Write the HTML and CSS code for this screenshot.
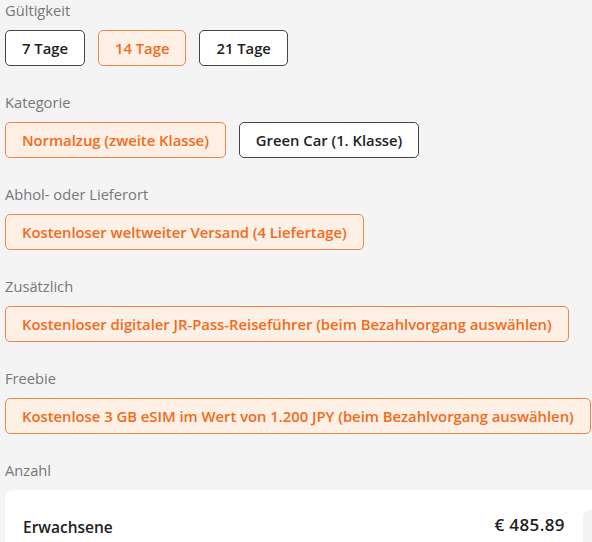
FILE: index.html
```html
<!DOCTYPE html>
<html lang="de">
<head>
    <meta charset="UTF-8">
    <title>JR Pass Optionen</title>
    <link rel="stylesheet" href="styles.css">
</head>
<body>
    <div class="options">
        <div class="group">
            <div class="label">Gültigkeit</div>
            <div class="choices">
                <button class="choice">7 Tage</button>
                <button class="choice active">14 Tage</button>
                <button class="choice">21 Tage</button>
            </div>
        </div>

        <div class="group">
            <div class="label">Kategorie</div>
            <div class="choices">
                <button class="choice active">Normalzug (zweite Klasse)</button>
                <button class="choice">Green Car (1. Klasse)</button>
            </div>
        </div>

        <div class="group">
            <div class="label">Abhol- oder Lieferort</div>
            <div class="choices">
                <button class="choice active">Kostenloser weltweiter Versand (4 Liefertage)</button>
            </div>
        </div>

        <div class="group">
            <div class="label">Zusätzlich</div>
            <div class="choices">
                <button class="choice active">Kostenloser digitaler JR-Pass-Reiseführer (beim Bezahlvorgang auswählen)</button>
            </div>
        </div>

        <div class="group">
            <div class="label">Freebie</div>
            <div class="choices">
                <button class="choice active">Kostenlose 3 GB eSIM im Wert von 1.200 JPY (beim Bezahlvorgang auswählen)</button>
            </div>
        </div>

        <div class="group">
            <div class="label">Anzahl</div>
            <div class="count-card">
                <span class="count-name">Erwachsene</span>
                <span class="count-price">€ 485.89</span>
                <div class="stepper"></div>
            </div>
        </div>
    </div>
</body>
</html>
```

FILE: styles.css
```css
body {
    margin: 0;
    background-color: #f4f4f4;
    font-family: 'Open Sans', sans-serif;
    color: #222;
    overflow: hidden;
}

.options {
    padding: 0 0 0 5px;
}

.group {
    margin-bottom: 26px;
}

.label {
    font-size: 14.7px;
    color: #777;
    height: 20px;
    line-height: 20px;
    margin-bottom: 10px;
}

.choices {
    display: flex;
    gap: 13px;
    white-space: nowrap;
}

.choice {
    flex: none;
    height: 36px;
    padding: 0 16px;
    font-family: inherit;
    font-size: 14.8px;
    font-weight: 600;
    color: #222;
    background-color: #fff;
    border: 1px solid #444;
    border-radius: 5px;
}

.choice.active {
    color: #f26a1b;
    background-color: #fff0e5;
    border-color: #f0844a;
}

.count-card {
    width: 720px;
    height: 80px;
    margin-top: 10px;
    padding: 20px 18px 0;
    display: flex;
    align-items: flex-start;
    gap: 18px;
    background-color: #fff;
    border-radius: 8px;
    box-sizing: border-box;
}

.count-name,
.count-price {
    line-height: 22px;
    font-weight: 600;
    color: #222;
}

.count-name {
    flex: 1;
    margin-top: 6px;
    font-size: 15.5px;
}

.count-price {
    margin-top: 4px;
    font-size: 17px;
    letter-spacing: 0.4px;
}

.stepper {
    flex: none;
    width: 124px;
    height: 40px;
    background-color: #f3f3f3;
    border-radius: 6px;
}
```
